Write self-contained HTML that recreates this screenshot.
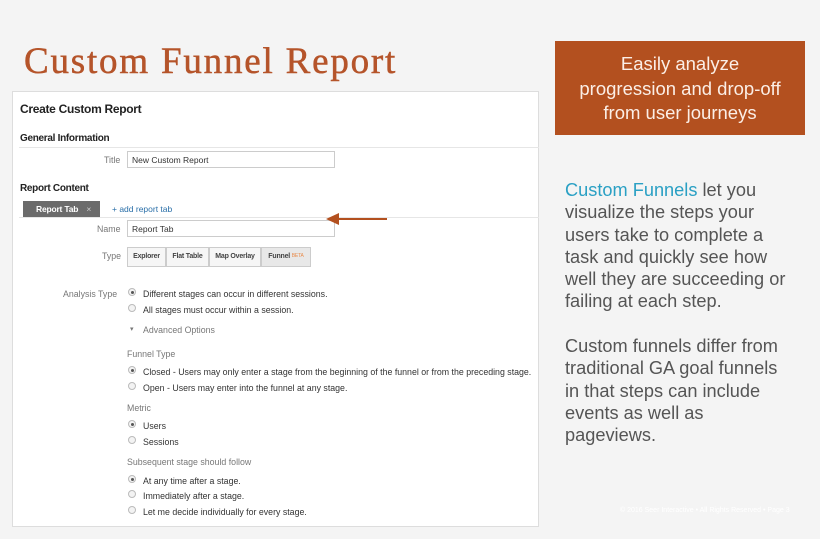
<!DOCTYPE html>
<html><head><meta charset="utf-8"><style>
*{margin:0;padding:0;box-sizing:border-box}
body{width:820px;height:539px;background:#f4f4f4;position:relative;overflow:hidden;font-family:"Liberation Sans",sans-serif}
.a{position:absolute;white-space:nowrap}
.t{font-family:"Liberation Serif",serif;font-size:37px;color:#b5542a;left:24px;top:40px;letter-spacing:1.8px;-webkit-text-stroke:0.5px #b5542a}
.box{left:555px;top:41px;width:250px;height:94px;background:#b3501f;color:#fbeee6;font-size:18.5px;line-height:24.5px;text-align:center;padding-top:11px;white-space:normal}
.txt{left:565px;top:179px;width:226px;font-size:18.2px;line-height:22.3px;color:#555;white-space:normal}
.panel{left:12px;top:91px;width:527px;height:436px;background:#fff;border:1px solid #ddd}
.p{font-size:8.8px;color:#333}
.lbl{font-size:8.8px;color:#777}
.b{font-weight:bold;color:#222}
.inp{position:absolute;border:1px solid #ccc;background:#fff;font-size:8.5px;color:#333;padding:3px 4px;height:17px;white-space:nowrap}
.r{position:absolute;width:8px;height:8px;border:1px solid #bbb;border-radius:50%;background:#f3f3f3}
.r.on::after{content:"";position:absolute;left:2px;top:2px;width:3px;height:3px;border-radius:50%;background:#555}
.btn{position:absolute;top:247px;height:20px;border:1px solid #ccc;background:#f6f6f6;font-size:7px;font-weight:bold;color:#444;padding:5px 0;text-align:center;white-space:nowrap;letter-spacing:-0.2px}
</style></head><body>
<div class="a t">Custom Funnel Report</div>
<div class="a box">Easily analyze<br>progression and drop-off<br>from user journeys</div>
<div class="a txt"><span style="color:#2aa0c4">Custom Funnels</span> let you visualize the steps your users take to complete a task and quickly see how well they are succeeding or failing at each step.<br><br>Custom funnels differ from traditional GA goal funnels in that steps can include events as well as pageviews.</div>
<div class="a" style="left:620px;top:507px;font-size:7px;color:#fff">© 2016 Seer Interactive • All Rights Reserved • Page 3</div>

<div class="a panel"></div>
<div class="a b" style="left:20px;top:102px;font-size:12px;letter-spacing:-0.3px">Create Custom Report</div>
<div class="a b" style="left:20px;top:133px;font-size:10px;letter-spacing:-0.3px">General Information</div>
<div class="a" style="left:19px;top:147px;width:520px;height:1px;background:#e6e6e6"></div>
<div class="a lbl" style="left:104px;top:155px">Title</div>
<div class="inp" style="left:127px;top:151px;width:208px">New Custom Report</div>
<div class="a b" style="left:20px;top:183px;font-size:10px;letter-spacing:-0.3px">Report Content</div>
<div class="a" style="left:23px;top:201px;width:77px;height:16px;background:#6b6b6b;color:#fff;font-size:8.5px;font-weight:bold;padding:3px 0 0 13px;letter-spacing:-0.2px">Report Tab <span style="font-weight:normal;color:#ccc;margin-left:6px">×</span></div>
<div class="a" style="left:112px;top:204px;font-size:8.5px;color:#2a6fa8">+ add report tab</div>
<div class="a" style="left:19px;top:217px;width:520px;height:1px;background:#e6e6e6"></div>
<div class="a lbl" style="left:97px;top:224px">Name</div>
<div class="inp" style="left:127px;top:220px;width:208px">Report Tab</div>
<svg class="a" style="left:326px;top:212px" width="62" height="14"><line x1="10" y1="7" x2="61" y2="7" stroke="#b3501f" stroke-width="2"/><polygon points="0,7 13,1 13,13" fill="#b3501f"/></svg>
<div class="a lbl" style="left:102px;top:251px">Type</div>
<div class="btn" style="left:127px;width:39px">Explorer</div>
<div class="btn" style="left:166px;width:43px">Flat Table</div>
<div class="btn" style="left:209px;width:52px">Map Overlay</div>
<div class="btn" style="left:261px;width:50px;background:#e8e8e8">Funnel <span style="color:#e88a4a;font-size:5px;font-weight:normal;vertical-align:top">BETA</span></div>

<div class="a lbl" style="left:63px;top:289px">Analysis Type</div>
<div class="r on" style="left:128px;top:288px"></div><div class="a p" style="left:143px;top:289px">Different stages can occur in different sessions.</div>
<div class="r" style="left:128px;top:304px"></div><div class="a p" style="left:143px;top:305px">All stages must occur within a session.</div>
<div class="a lbl" style="left:130px;top:325px;font-size:7px">▾</div><div class="a lbl" style="left:143px;top:325px">Advanced Options</div>
<div class="a lbl" style="left:127px;top:349px">Funnel Type</div>
<div class="r on" style="left:128px;top:366px"></div><div class="a p" style="left:143px;top:367px">Closed - Users may only enter a stage from the beginning of the funnel or from the preceding stage.</div>
<div class="r" style="left:128px;top:382px"></div><div class="a p" style="left:143px;top:383px">Open - Users may enter into the funnel at any stage.</div>
<div class="a lbl" style="left:127px;top:403px">Metric</div>
<div class="r on" style="left:128px;top:420px"></div><div class="a p" style="left:143px;top:421px">Users</div>
<div class="r" style="left:128px;top:436px"></div><div class="a p" style="left:143px;top:437px">Sessions</div>
<div class="a lbl" style="left:127px;top:457px">Subsequent stage should follow</div>
<div class="r on" style="left:128px;top:475px"></div><div class="a p" style="left:143px;top:476px">At any time after a stage.</div>
<div class="r" style="left:128px;top:490px"></div><div class="a p" style="left:143px;top:491px">Immediately after a stage.</div>
<div class="r" style="left:128px;top:506px"></div><div class="a p" style="left:143px;top:507px">Let me decide individually for every stage.</div>
</body></html>
